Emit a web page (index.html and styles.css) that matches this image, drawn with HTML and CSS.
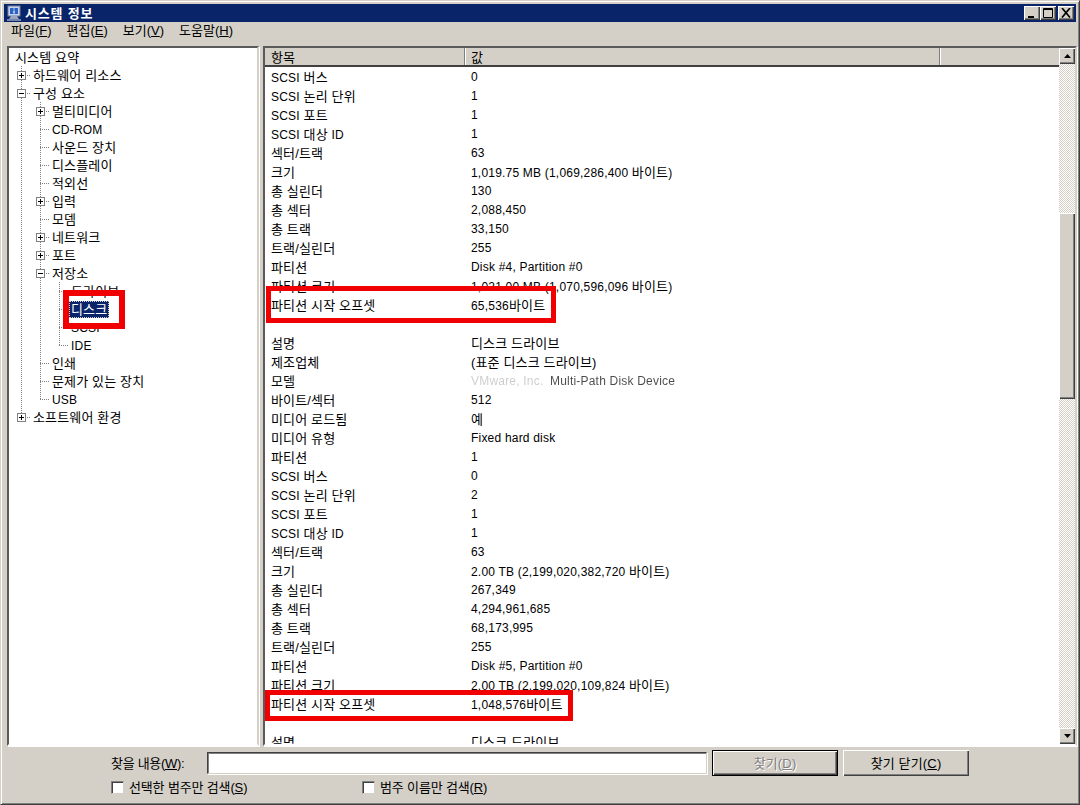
FILE: index.html
```html
<!DOCTYPE html>
<html lang="ko">
<head>
<meta charset="utf-8">
<title>시스템 정보</title>
<link rel="stylesheet" href="styles.css">
</head>
<body>
<div class="window">
  <header class="titlebar">
    <svg class="app-icon" width="16" height="16" viewBox="0 0 16 16">
      <rect x="2" y="1" width="12" height="10" fill="#c8d4ec" stroke="#6c7c9c"/>
      <rect x="4" y="3" width="8" height="6" fill="#2a62c8"/>
      <path d="M8 3.500v1M8 5.500v3" stroke="#fff" stroke-width="1.200"/>
      <path d="M5 11h6l2 3H3z" fill="#9aa6c0"/>
      <path d="M1 15h14" stroke="#dfe4ee"/>
    </svg>
    <span class="title-text">시스템 정보</span>
    <div class="win-buttons">
      <button class="win-btn"><svg width="12" height="10" viewBox="0 0 12 10"><path d="M2 8h6v2H2z" fill="#000"/></svg></button>
      <button class="win-btn"><svg width="12" height="10" viewBox="0 0 12 10"><path d="M1.500 .5h9v9h-9z M1 1.500h10" fill="none" stroke="#000"/></svg></button>
      <button class="win-btn win-close"><svg width="12" height="10" viewBox="0 0 12 10"><path d="M2 0l8 9.500M10 0L2 9.500" fill="none" stroke="#000" stroke-width="1.700"/></svg></button>
    </div>
  </header>

  <nav class="menubar">
    <span class="menu-item">파일(<u>F</u>)</span>
    <span class="menu-item">편집(<u>E</u>)</span>
    <span class="menu-item">보기(<u>V</u>)</span>
    <span class="menu-item">도움말(<u>H</u>)</span>
  </nav>

  <main class="panes">
    <section class="tree sunken">
      <div class="node"><span class="label root">시스템 요약</span></div>
      <div class="node"><i class="cell tee"><b class="box plus"></b></i><span class="label">하드웨어 리소스</span></div>
      <div class="node"><i class="cell tee"><b class="box minus"></b></i><span class="label">구성 요소</span></div>
      <div class="node"><i class="cell pipe"></i><i class="cell tee"><b class="box plus"></b></i><span class="label">멀티미디어</span></div>
      <div class="node"><i class="cell pipe"></i><i class="cell tee"></i><span class="label en">CD-ROM</span></div>
      <div class="node"><i class="cell pipe"></i><i class="cell tee"></i><span class="label">사운드 장치</span></div>
      <div class="node"><i class="cell pipe"></i><i class="cell tee"></i><span class="label">디스플레이</span></div>
      <div class="node"><i class="cell pipe"></i><i class="cell tee"></i><span class="label">적외선</span></div>
      <div class="node"><i class="cell pipe"></i><i class="cell tee"><b class="box plus"></b></i><span class="label">입력</span></div>
      <div class="node"><i class="cell pipe"></i><i class="cell tee"></i><span class="label">모뎀</span></div>
      <div class="node"><i class="cell pipe"></i><i class="cell tee"><b class="box plus"></b></i><span class="label">네트워크</span></div>
      <div class="node"><i class="cell pipe"></i><i class="cell tee"><b class="box plus"></b></i><span class="label">포트</span></div>
      <div class="node"><i class="cell pipe"></i><i class="cell tee"><b class="box minus"></b></i><span class="label">저장소</span></div>
      <div class="node"><i class="cell pipe"></i><i class="cell pipe"></i><i class="cell tee"></i><span class="label">드라이브</span></div>
      <div class="node"><i class="cell pipe"></i><i class="cell pipe"></i><i class="cell tee"></i><span class="label selected">디스크</span></div>
      <div class="node"><i class="cell pipe"></i><i class="cell pipe"></i><i class="cell tee"></i><span class="label en">SCSI</span></div>
      <div class="node"><i class="cell pipe"></i><i class="cell pipe"></i><i class="cell elbow"></i><span class="label en">IDE</span></div>
      <div class="node"><i class="cell pipe"></i><i class="cell tee"></i><span class="label">인쇄</span></div>
      <div class="node"><i class="cell pipe"></i><i class="cell tee"></i><span class="label">문제가 있는 장치</span></div>
      <div class="node"><i class="cell pipe"></i><i class="cell elbow"></i><span class="label en">USB</span></div>
      <div class="node"><i class="cell elbow"><b class="box plus"></b></i><span class="label">소프트웨어 환경</span></div>
    </section>

    <section class="list sunken">
      <div class="list-main">
        <div class="list-head">
          <span class="col col-a">항목</span>
          <span class="col col-b">값</span>
          <span class="col col-c"></span>
        </div>
        <div class="rows">
          <div class="row"><span><span class="en">SCSI</span> 버스</span><span class="en">0</span></div>
          <div class="row"><span><span class="en">SCSI</span> 논리 단위</span><span class="en">1</span></div>
          <div class="row"><span><span class="en">SCSI</span> 포트</span><span class="en">1</span></div>
          <div class="row"><span><span class="en">SCSI</span> 대상 <span class="en">ID</span></span><span class="en">1</span></div>
          <div class="row"><span>섹터/트랙</span><span class="en">63</span></div>
          <div class="row"><span>크기</span><span><span class="en">1,019.75 MB (1,069,286,400 </span>바이트<span class="en">)</span></span></div>
          <div class="row"><span>총 실린더</span><span class="en">130</span></div>
          <div class="row"><span>총 섹터</span><span class="en">2,088,450</span></div>
          <div class="row"><span>총 트랙</span><span class="en">33,150</span></div>
          <div class="row"><span>트랙/실린더</span><span class="en">255</span></div>
          <div class="row"><span>파티션</span><span class="en">Disk #4, Partition #0</span></div>
          <div class="row"><span>파티션 크기</span><span><span class="en">1,021.00 MB (1,070,596,096 </span>바이트<span class="en">)</span></span></div>
          <div class="row"><span>파티션 시작 오프셋</span><span><span class="en">65,536</span>바이트</span></div>
          <div class="row"></div>
          <div class="row"><span>설명</span><span>디스크 드라이브</span></div>
          <div class="row"><span>제조업체</span><span>(표준 디스크 드라이브)</span></div>
          <div class="row"><span>모델</span><span class="en smudged"><span class="smudge-heavy">VMware, Inc.</span><span class="smudge-light">Multi-Path Disk Device</span></span></div>
          <div class="row"><span>바이트/섹터</span><span class="en">512</span></div>
          <div class="row"><span>미디어 로드됨</span><span>예</span></div>
          <div class="row"><span>미디어 유형</span><span class="en">Fixed hard disk</span></div>
          <div class="row"><span>파티션</span><span class="en">1</span></div>
          <div class="row"><span><span class="en">SCSI</span> 버스</span><span class="en">0</span></div>
          <div class="row"><span><span class="en">SCSI</span> 논리 단위</span><span class="en">2</span></div>
          <div class="row"><span><span class="en">SCSI</span> 포트</span><span class="en">1</span></div>
          <div class="row"><span><span class="en">SCSI</span> 대상 <span class="en">ID</span></span><span class="en">1</span></div>
          <div class="row"><span>섹터/트랙</span><span class="en">63</span></div>
          <div class="row"><span>크기</span><span><span class="en">2.00 TB (2,199,020,382,720 </span>바이트<span class="en">)</span></span></div>
          <div class="row"><span>총 실린더</span><span class="en">267,349</span></div>
          <div class="row"><span>총 섹터</span><span class="en">4,294,961,685</span></div>
          <div class="row"><span>총 트랙</span><span class="en">68,173,995</span></div>
          <div class="row"><span>트랙/실린더</span><span class="en">255</span></div>
          <div class="row"><span>파티션</span><span class="en">Disk #5, Partition #0</span></div>
          <div class="row"><span>파티션 크기</span><span><span class="en">2.00 TB (2,199,020,109,824 </span>바이트<span class="en">)</span></span></div>
          <div class="row"><span>파티션 시작 오프셋</span><span><span class="en">1,048,576</span>바이트</span></div>
          <div class="row"></div>
          <div class="row"><span>설명</span><span>디스크 드라이브</span></div>
        </div>
      </div>
      <div class="scrollbar">
        <button class="sb-btn"><svg width="7" height="4" viewBox="0 0 7 4"><path d="M3.500 0L7 4H0z" fill="#000"/></svg></button>
        <div class="sb-track sb-before"></div>
        <div class="sb-thumb"></div>
        <div class="sb-track sb-after"></div>
        <button class="sb-btn"><svg width="7" height="4" viewBox="0 0 7 4"><path d="M0 0h7L3.500 4z" fill="#000"/></svg></button>
      </div>
    </section>
  </main>

  <footer class="find">
    <div class="find-row">
      <label class="find-label">찾을 내용(<u>W</u>):</label>
      <div class="find-input"></div>
      <button class="btn btn-default" disabled>찾기(<u>D</u>)</button>
      <button class="btn">찾기 닫기(<u>C</u>)</button>
    </div>
    <div class="check-row">
      <label class="check check-a"><i class="checkbox"></i>선택한 범주만 검색(<u>S</u>)</label>
      <label class="check"><i class="checkbox"></i>범주 이름만 검색(<u>R</u>)</label>
    </div>
  </footer>
</div>

<div class="mark mark-disk"></div>
<div class="mark mark-first"></div>
<div class="mark mark-second"></div>
</body>
</html>
```

FILE: styles.css
```css
* { box-sizing: border-box; }
html, body { margin: 0; height: 100%; }
body {
  position: relative;
  overflow: hidden;
  background: #d4d0c8;
  font: 13px/1 "Liberation Sans", "Noto Sans CJK KR", sans-serif;
  color: #000;
  letter-spacing: .15px;
}
.en { font-size: 12px; letter-spacing: .2px; }
button { font: inherit; letter-spacing: inherit; color: inherit; padding: 0; }
u { text-underline-offset: 1px; }

.window {
  width: 1080px;
  height: 805px;
  display: flex;
  flex-direction: column;
  padding: 4px;
  background: #d4d0c8;
  border: 1px solid;
  border-color: #d4d0c8 #404040 #404040 #d4d0c8;
  box-shadow: inset 1px 1px 0 #fff, inset -1px -1px 0 #808080;
}

.titlebar {
  height: 18px;
  margin: -1px -1px 0;
  flex: none;
  display: flex;
  align-items: center;
  background: #0a246a;
  color: #fff;
  padding: 0 2px;
}
.app-icon { flex: none; }
.title-text { margin-left: 3px; font-weight: 700; font-size: 13px; letter-spacing: .8px; }
.win-buttons { margin-left: auto; display: flex; }
.win-btn {
  width: 16px;
  height: 14px;
  display: flex;
  align-items: center;
  justify-content: center;
  background: #d4d0c8;
  border: 0;
  box-shadow: inset 1px 1px 0 #fff, inset -1px -1px 0 #404040, inset -2px -2px 0 #808080;
}
.win-close { margin-left: 2px; }

.menubar {
  height: 18px;
  flex: none;
  display: flex;
  align-items: center;
  gap: 14px;
  padding: 0 0 1px 6px;
}
.menu-item { white-space: nowrap; letter-spacing: 0; }
.menu-item:nth-child(n+2) { margin-left: 1px; }

.panes {
  flex: none;
  height: 700px;
  margin: 6px -2px 0 2px;
  display: flex;
  gap: 4px;
}
.sunken {
  border: 2px solid;
  border-color: #5a5a5a #d4d0c8 #fff #5a5a5a;
  box-shadow: 1px 1px 0 #fff;
  background: #fff;
}

.tree { width: 252px; flex: none; overflow: hidden; }
.node { height: 18px; display: flex; align-items: center; padding-left: 3px; white-space: nowrap; }
.cell {
  flex: none;
  width: 19px;
  height: 18px;
  display: flex;
  align-items: center;
}
.pipe { background: repeating-linear-gradient(180deg, #808080 0 1px, transparent 1px 2px) 9px 0 / 1px 100% no-repeat; }
.tee {
  background:
    repeating-linear-gradient(90deg, #808080 0 1px, transparent 1px 2px) 9px 9px / 10px 1px no-repeat,
    repeating-linear-gradient(180deg, #808080 0 1px, transparent 1px 2px) 9px 0 / 1px 100% no-repeat;
}
.elbow {
  background:
    repeating-linear-gradient(90deg, #808080 0 1px, transparent 1px 2px) 9px 9px / 10px 1px no-repeat,
    repeating-linear-gradient(180deg, #808080 0 1px, transparent 1px 2px) 9px 0 / 1px 10px no-repeat;
}
.box {
  width: 9px;
  height: 9px;
  margin-left: 5px;
  border: 1px solid #808080;
  background-color: #fff;
  background-repeat: no-repeat;
}
.minus { background-image: linear-gradient(#000, #000); background-size: 5px 1px; background-position: 1px 3px; }
.plus {
  background-image: linear-gradient(#000, #000), linear-gradient(#000, #000);
  background-size: 5px 1px, 1px 5px;
  background-position: 1px 3px, 3px 1px;
}
.label { padding: 0 2px; height: 17px; line-height: 18px; }
.label.root { padding: 0; margin-left: 3px; }
.label.selected {
  width: 40px;
  background: #0a246a;
  color: #fff;
  outline: 1px dotted #d4d0c8;
  outline-offset: -1px;
}

.list { flex: 1; min-width: 0; display: flex; overflow: hidden; }
.list-main { flex: 1; min-width: 0; display: flex; flex-direction: column; }
.list-head { flex: none; height: 19px; display: flex; background: #d4d0c8; border-bottom: 2px solid #404040; }
.col { height: 17px; line-height: 19px; padding-left: 6px; border-right: 1px solid #808080; box-shadow: inset -1px 0 0 #d4d0c8, 1px 0 0 #fff; flex: none; }
.col-a { width: 200px; }
.col-b { width: 475px; }
.col-c { flex: 1; border-right: 0; box-shadow: none; }
.rows { flex: 1; overflow: hidden; }
.row { height: 19px; display: grid; grid-template-columns: 200px 1fr; align-items: center; padding: 1px 0 0 6px; white-space: nowrap; }

.smudged { display: inline-block; }
.smudge-heavy { display: inline-block; width: 79px; opacity: .2; filter: blur(.7px); }
.smudge-light { opacity: .7; filter: blur(.3px); }

.scrollbar { flex: none; width: 16px; display: flex; flex-direction: column; }
.sb-btn {
  flex: none;
  width: 16px;
  height: 16px;
  display: flex;
  align-items: center;
  justify-content: center;
  border: 0;
  background: #d4d0c8;
  box-shadow: inset 1px 1px 0 #fff, inset -1px -1px 0 #404040, inset -2px -2px 0 #808080;
}
.sb-track { background: repeating-conic-gradient(#d4d0c8 0 25%, #fff 0 50%) 0 0 / 2px 2px; }
.sb-before { flex: none; height: 149px; }
.sb-after { flex: 1; }
.sb-thumb {
  flex: none;
  height: 186px;
  background: #d4d0c8;
  box-shadow: inset 1px 1px 0 #fff, inset -1px -1px 0 #404040, inset -2px -2px 0 #808080;
}

.find { flex: 1; padding: 4px 0 0 106px; }
.find-row { display: flex; align-items: center; height: 26px; }
.find-label { width: 96px; white-space: nowrap; letter-spacing: -.3px; }
.find-input {
  width: 500px;
  height: 22px;
  background: #fff;
  border: 1px solid;
  border-color: #404040 #d4d0c8 #d4d0c8 #404040;
  box-shadow: inset 1px 1px 0 #808080, 1px 1px 0 #fff;
}
.btn {
  width: 126px;
  height: 26px;
  margin-left: 5px;
  border: 0;
  background: #d4d0c8;
  box-shadow: inset 1px 1px 0 #fff, inset -1px -1px 0 #404040, inset -2px -2px 0 #808080;
}
.btn-default {
  border: 1px solid #000;
  color: #808080;
  text-shadow: 1px 1px 0 #fff;
}
.check-row { display: flex; align-items: center; margin-top: 5px; height: 13px; }
.check { display: flex; align-items: center; white-space: nowrap; letter-spacing: -.15px; }
.check-a { width: 251px; }
.checkbox {
  flex: none;
  width: 13px;
  height: 13px;
  margin-right: 5px;
  background: #fff;
  border: 1px solid;
  border-color: #808080 #d4d0c8 #d4d0c8 #808080;
  box-shadow: inset 1px 1px 0 #404040;
}

.mark { position: absolute; border: 5px solid #f00000; }
.mark-disk { left: 63px; top: 290px; width: 62px; height: 39px; border-width: 6px; }
.mark-first { left: 266px; top: 286px; width: 290px; height: 37px; }
.mark-second { left: 265px; top: 690px; width: 308px; height: 31px; }
```
